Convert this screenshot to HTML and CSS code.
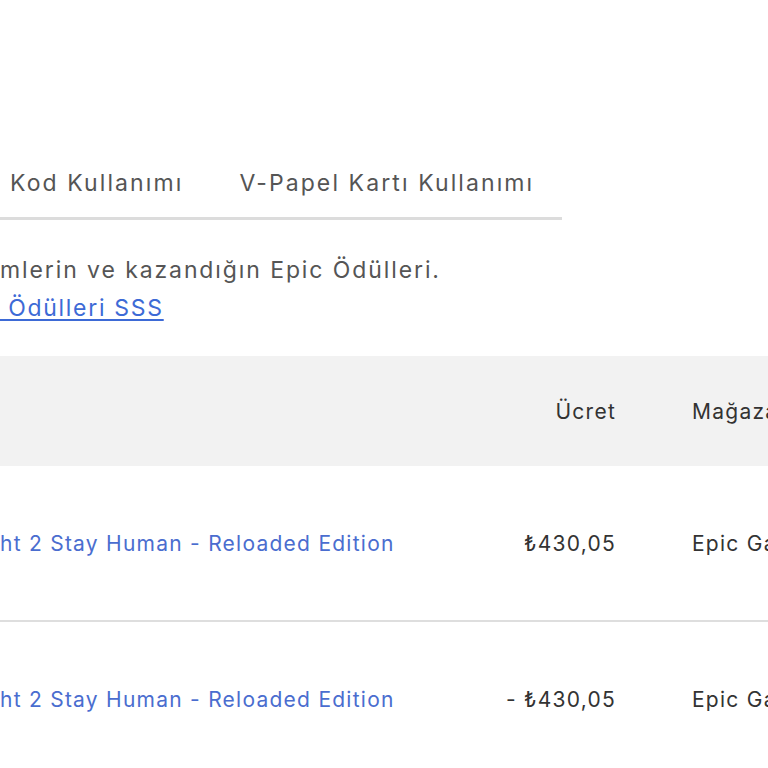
FILE: index.html
```html
<!DOCTYPE html>
<html lang="tr">
<head>
<meta charset="utf-8">
<title>İşlemler</title>
<link rel="stylesheet" href="styles.css">
</head>
<body>
<main class="page">
  <nav class="tabs">
    <span class="tab">Kod Kullanımı</span>
    <span class="tab">V-Papel Kartı Kullanımı</span>
  </nav>
  <section class="intro">
    <p class="desc">mlerin ve kazandığın Epic Ödülleri.</p>
    <p class="faq"><a href="#" class="faq-link"> Ödülleri SSS</a></p>
  </section>
  <div class="table">
    <div class="row head">
      <span class="c-name"></span>
      <span class="c-price">Ücret</span>
      <span class="c-store">Mağaza</span>
    </div>
    <div class="row">
      <a href="#" class="c-name item">ht 2 Stay Human - Reloaded Edition</a>
      <span class="c-price">₺430,05</span>
      <span class="c-store">Epic Games Store</span>
    </div>
    <div class="row">
      <a href="#" class="c-name item">ht 2 Stay Human - Reloaded Edition</a>
      <span class="c-price">- ₺430,05</span>
      <span class="c-store">Epic Games Store</span>
    </div>
  </div>
</main>
</body>
</html>
```
FILE: styles.css
```css
html, body {
  margin: 0;
  padding: 0;
  background: #ffffff;
  overflow: hidden;
}
body {
  font-family: Inter, "Noto Sans", sans-serif;
  width: 768px;
  height: 768px;
}
.page {
  padding-top: 164px;
}
.tabs {
  display: flex;
  gap: 56px;
  width: 552px;
  padding-left: 10px;
  border-bottom: 3px solid #dcdcdc;
  height: 53px;
  box-sizing: content-box;
}
.tab {
  font-size: 23px;
  letter-spacing: 2.1px;
  line-height: 38px;
  color: #555555;
}
.intro {
  padding-top: 31px;
}
.desc {
  margin: 0;
  font-size: 23px;
  letter-spacing: 1.9px;
  line-height: 38px;
  color: #555555;
}
.faq {
  margin: 0;
  font-size: 23px;
  letter-spacing: 1.7px;
  line-height: 39px;
}
.faq-link {
  color: #3d6ad6;
  text-decoration: underline;
  text-decoration-thickness: 2px;
  text-underline-offset: 3px;
  white-space: pre;
}
.table {
  margin-top: 28px;
  width: 900px;
}
.row {
  display: grid;
  grid-template-columns: 470px 146px 1fr;
  align-items: center;
  height: 154px;
  border-bottom: 2px solid #dedede;
  font-size: 21px;
  letter-spacing: 1.25px;
  color: #333333;
  white-space: nowrap;
}
.row.head {
  height: 110px;
  background: #f2f2f2;
  border-bottom: none;
}
.c-price {
  text-align: right;
}
.c-store {
  padding-left: 76px;
}
.item {
  color: #4a6dcf;
  text-decoration: none;
}
```
